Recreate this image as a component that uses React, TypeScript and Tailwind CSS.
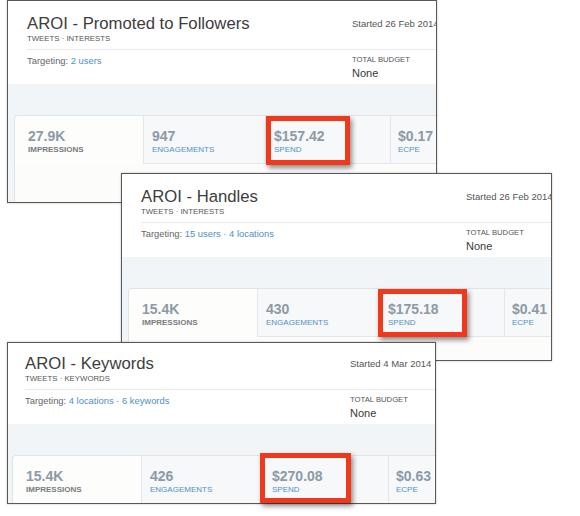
import React from "react";

type Stat = { value: string; label: string };

type CampaignCardProps = {
  pos: string;
  headPad: string;
  shift: string;
  box: string;
  title: string;
  sub: string;
  date: string;
  targets: string[];
  stats: Stat[];
};

const tabWidths = ["w-[129px]", "w-[122px]", "w-[125px]", "w-[120px]"];
const tabPads = ["pl-[13px]", "pl-[8px]", "pl-[8px]", "pl-[7px]"];

function StatTab({ stat, index }: { stat: Stat; index: number }) {
  const active = index === 0;
  return (
    <div
      className={`${tabWidths[index]} ${tabPads[index]} shrink-0 border-r border-[#e2e7eb] pt-[12px] pb-[8px] ${
        active ? "bg-[#fdfdfc] rounded-tl-[4px]" : "bg-[#f6f8fa] border-b"
      }`}
    >
      <div className="text-[14px] leading-[16px] font-bold text-[#8d9aa6]">{stat.value}</div>
      <div
        className={`mt-[1px] text-[8px] leading-[10px] ${
          active ? "font-bold text-[#777b80]" : "text-[#5290c8]"
        }`}
      >
        {stat.label}
      </div>
    </div>
  );
}

function CampaignCard({ pos, headPad, shift, box, title, sub, date, targets, stats }: CampaignCardProps) {
  return (
    <div className={`absolute ${pos}`}>
      <div className="h-full w-full overflow-hidden border border-[#585858] bg-white shadow-[0_0_2px_rgba(0,0,0,0.25)]">
        <div className={`w-[460px] ${shift}`}>
          {/* heading */}
          <div className={`flex pl-[19px] pb-[6px] ${headPad}`}>
            <div className="w-[325px] shrink-0">
              <div className="text-[16.7px] leading-[17px] text-[#3d3d3d] whitespace-nowrap">{title}</div>
              <div className="mt-[2px] text-[7.8px] leading-[9px] text-[#555] uppercase whitespace-nowrap">
                {sub}
              </div>
            </div>
            <div className="mt-[3px] whitespace-nowrap text-[9.5px] leading-[11px] text-[#555]">{date}</div>
          </div>
          <div className="ml-[19px] border-t border-[#e8eaec]" />
          {/* targeting + budget */}
          <div className="flex pl-[19px] pt-[5px] pb-[5px]">
            <div className="w-[325px] shrink-0 text-[9.4px] leading-[11px] text-[#666] whitespace-nowrap">
              Targeting:{" "}
              {targets.map((t, i) => (
                <span key={t} className="text-[#4e8fc6]">
                  {i > 0 ? " · " : ""}
                  {t}
                </span>
              ))}
            </div>
            <div>
              <div className="text-[7.7px] leading-[10px] text-[#555] whitespace-nowrap">TOTAL BUDGET</div>
              <div className="mt-[2px] text-[11px] leading-[12px] text-[#3a3a3a]">None</div>
            </div>
          </div>
          {/* metrics band */}
          <div className="bg-[#f2f5f8] pt-[31px] pl-[6px] h-[200px]">
            <div className="h-full rounded-tl-[4px] border-l border-t border-[#dfe4e8] bg-[#fcfcfb]">
              <div className="flex">
                {stats.map((s, i) => (
                  <StatTab key={s.label} stat={s} index={i} />
                ))}
              </div>
            </div>
          </div>
        </div>
      </div>
      <div
        className={`absolute ${box} border-[5px] border-[#f0381c] shadow-[2px_3px_5px_rgba(0,0,0,0.45)]`}
      />
    </div>
  );
}

export default function App() {
  return (
    <div className="relative w-[580px] h-[516px] overflow-hidden bg-white font-['Liberation_Sans',Arial,sans-serif]">
      <CampaignCard
        pos="left-[7px] top-[0px] w-[430px] h-[203px]"
        headPad="pt-[14px]"
        shift="ml-0"
        box="left-[259px] top-[116px] w-[84px] h-[49px]"
        title="AROI - Promoted to Followers"
        sub="Tweets · Interests"
        date="Started 26 Feb 2014"
        targets={["2 users"]}
        stats={[
          { value: "27.9K", label: "IMPRESSIONS" },
          { value: "947", label: "ENGAGEMENTS" },
          { value: "$157.42", label: "SPEND" },
          { value: "$0.17", label: "ECPE" },
        ]}
      />
      <CampaignCard
        pos="left-[121px] top-[173px] w-[431px] h-[188px]"
        headPad="pt-[14px]"
        shift="ml-0"
        box="left-[257px] top-[116px] w-[89px] h-[48px]"
        title="AROI - Handles"
        sub="Tweets · Interests"
        date="Started 26 Feb 2014"
        targets={["15 users", "4 locations"]}
        stats={[
          { value: "15.4K", label: "IMPRESSIONS" },
          { value: "430", label: "ENGAGEMENTS" },
          { value: "$175.18", label: "SPEND" },
          { value: "$0.41", label: "ECPE" },
        ]}
      />
      <CampaignCard
        pos="left-[7px] top-[342px] w-[429px] h-[162px]"
        headPad="pt-[12px]"
        shift="-ml-[2px]"
        box="left-[253px] top-[111px] w-[91px] h-[50px]"
        title="AROI - Keywords"
        sub="Tweets · Keywords"
        date="Started 4 Mar 2014"
        targets={["4 locations", "6 keywords"]}
        stats={[
          { value: "15.4K", label: "IMPRESSIONS" },
          { value: "426", label: "ENGAGEMENTS" },
          { value: "$270.08", label: "SPEND" },
          { value: "$0.63", label: "ECPE" },
        ]}
      />
    </div>
  );
}
